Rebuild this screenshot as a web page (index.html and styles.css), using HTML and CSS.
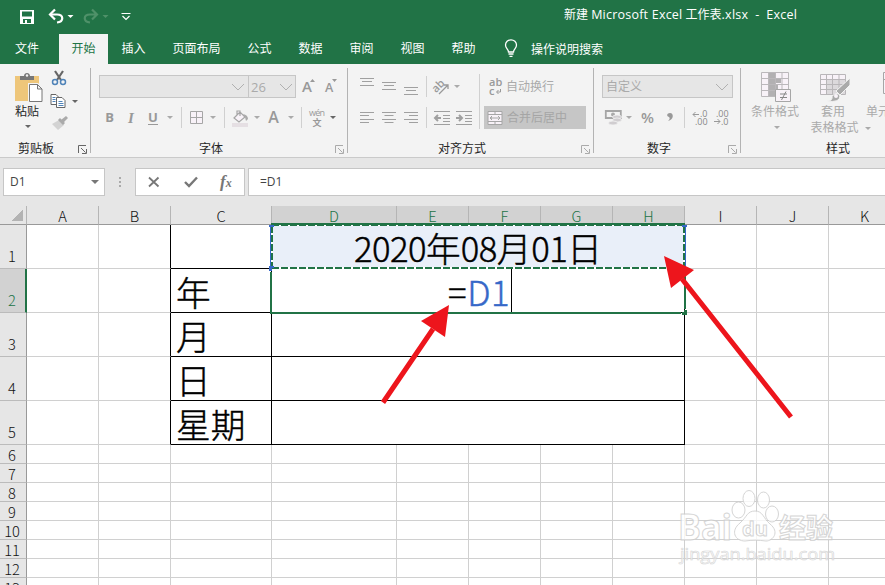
FILE: index.html
```html
<!DOCTYPE html>
<html lang="zh-CN">
<head>
<meta charset="utf-8">
<title>新建 Microsoft Excel 工作表.xlsx - Excel</title>
<link rel="stylesheet" href="styles.css">
</head>
<body>
<header class="titlebar">
  <svg class="quick" width="140" height="34" viewBox="0 0 140 34" fill="none">
    <path d="M20 10h14v14H20z" fill="#fff"/><path d="M22 11.5h10v5H22zM23 19h8v4h-8z" fill="#217346"/><path d="M25 20h2v3h-2z" fill="#fff"/>
    <path d="M50 14.500h7c7 0 7 7 0 8" stroke="#fff" stroke-width="2.200"/><path d="M55 9.500l-5 5 5 5" stroke="#fff" stroke-width="2.200"/>
    <path d="M67.500 15h6l-3 3z" fill="#fff"/>
    <g stroke="#4f9169" stroke-width="2.200"><path d="M97 14.500h-7c-7 0-7 7 0 8M92 9.500l5 5-5 5"/></g>
    <path d="M102.500 15h6l-3 3z" fill="#4f9169"/>
    <path d="M121.500 13.500h9M122.500 16l3.500 3.500 3.500-3.500" stroke="#fff" stroke-width="1.200"/>
  </svg>
  <div class="doc-title">新建 <span>Microsoft Excel</span> 工作表<span>.xlsx&nbsp; -&nbsp; Excel</span></div>
</header>
<nav class="tabs">
  <span class="t-file">文件</span><span class="active">开始</span><span>插入</span><span class="wide">页面布局</span><span>公式</span><span>数据</span><span>审阅</span><span>视图</span><span>帮助</span>
  <svg width="14" height="20" viewBox="0 0 14 20" fill="none" stroke="#fff" stroke-width="1.300"><path d="M4.500 13c0-3-3-3.500-3-7a5.500 5.200 0 0 1 11 0c0 3.500-3 4-3 7zM4.500 15h5M5.500 17.300h3"/></svg>
  <span class="tell">操作说明搜索</span>
</nav>
<section class="ribbon">
  <div class="group clipboard">
    <div class="body clip-body">
      <div class="paste">
        <svg width="30" height="32" viewBox="0 0 30 32"><path d="M1 4h24v25H1z" fill="#eec67a"/><path d="M6 8V4h4c0-4 6-4 6 0h4v4z" fill="#777"/><circle cx="13" cy="3.500" r="1.200" fill="#f3f3f3"/><path d="M14 11h10l6 6v15H14z" fill="#f3f3f3"/><path d="M15.500 12.500h8l4.500 4.500v12.500H15.500zM23.500 12.500V17H28" fill="#fff" stroke="#777"/></svg>
        <span>粘贴</span><i class="caret dark"></i>
      </div>
      <div class="clip-tools">
        <svg width="16" height="18" viewBox="0 0 16 18" fill="none"><path d="M4 2l6 9M12 2l-6 9" stroke="#666" stroke-width="2.200"/><circle cx="4" cy="13" r="2.500" stroke="#4f83b8" stroke-width="1.500"/><circle cx="12" cy="13" r="2.500" stroke="#4f83b8" stroke-width="1.500"/></svg>
        <div class="copy"><svg width="16" height="16" viewBox="0 0 16 16" fill="#fff" stroke="#666"><path d="M1 1.500h5l3 3v7H1z"/><path d="M2.500 4.500h3M2.500 6.500h3M2.500 8.500h3" stroke="#4f83b8"/><path d="M6.500 4.500h5.500l3 3v7H6.500z"/><path d="M8.500 8.500h4M8.500 10.500h5M8.500 12.500h5" stroke="#4f83b8"/></svg><i class="caret dark"></i></div>
        <svg width="17" height="15" viewBox="0 0 17 15"><path d="M1 8l7-4 5 5-6 5z" fill="#d3d3d3"/><path d="M7 4l2-2 5 5-2 2zM10 4l5-4 2 2-5 5z" fill="#aaa"/></svg>
      </div>
    </div>
    <div class="label"><span>剪贴板</span><svg class="launch on" width="10" height="10" viewBox="0 0 10 10"><path d="M.5 8V.5H8M3 3l4.500 4.500M8.500 4v4.500H4"/></svg></div>
  </div>

  <div class="group font">
    <div class="body">
      <div class="row font-top">
        <div class="combo name"><svg class="chev" width="16" height="10" viewBox="0 0 16 10"><path d="M2 2l6 6 6-6"/></svg></div>
        <div class="combo size"><span>26</span><svg class="chev" width="16" height="10" viewBox="0 0 16 10"><path d="M2 2l6 6 6-6"/></svg></div>
        <svg class="grow" width="40" height="23" viewBox="0 0 40 23" fill="#999"><text x="3" y="17" class="gl" font-size="15">A</text><path d="M11 7h5l-2.500-3zM33 4h5l-2.500 3z"/><text x="26" y="17" class="gl" font-size="12.500">A</text></svg>
      </div>
      <div class="row font-bottom">
        <b class="bold">B</b><b class="ital">I</b><b class="under">U</b><i class="caret"></i><i class="sep"></i>
        <svg width="15" height="15" viewBox="0 0 15 15" fill="#f8f2f8" stroke="#a6a6a6"><path d="M1.500 1.500h12v12h-12zM7.500 1.500v12M1.500 7.500h12"/></svg><i class="caret"></i><i class="sep"></i>
        <svg width="18" height="18" viewBox="0 0 18 18"><path d="M1 14h16v4H1z" fill="#e5dfe3"/><path d="M3 9l6-6 5 5-6 5zM6 6V2h3v5" fill="#f8f2f8" stroke="#a6a6a6" stroke-width="1.200"/><path d="M12 5q5 1 5 5l-2 2-1-4z" fill="#aaa"/></svg><i class="caret"></i>
        <b class="colour">A</b><i class="caret"></i><i class="sep"></i>
        <svg width="18" height="20" viewBox="0 0 18 20" fill="#999"><text x="1" y="8" font-size="9" textLength="16" class="gl2">wén</text><text x="4.500" y="18" font-size="9" class="cj">文</text></svg><i class="caret dark"></i>
      </div>
    </div>
    <div class="label"><span>字体</span><svg class="launch" width="10" height="10" viewBox="0 0 10 10"><path d="M.5 8V.5H8M3 3l4.500 4.500M8.500 4v4.500H4"/></svg></div>
  </div>

  <div class="group align">
    <div class="body align-body">
      <div class="align-left">
        <div class="row al-top">
          <svg width="14" height="23" viewBox="0 0 14 23" class="ln"><path d="M0 3.500h14M2 6.500h10M0 10.500h14"/></svg>
          <svg width="14" height="23" viewBox="0 0 14 23" class="ln"><path d="M0 7.500h14M2 10.500h10M0 14.500h14"/></svg>
          <svg width="14" height="23" viewBox="0 0 14 23" class="ln"><path d="M0 12.500h14M2 15.500h10M0 19.500h14"/></svg>
          <i class="sep"></i>
          <svg width="18" height="18" viewBox="0 0 18 18" fill="none" stroke="#999"><text x="0" y="12" font-size="11" class="gl" fill="#999" stroke="none" transform="rotate(-45 6 9)">ab</text><path d="M7 16l9-9M12 7h4v4" stroke-width="1.300"/></svg>
          <i class="caret"></i>
        </div>
        <div class="row al-bottom">
          <svg width="14" height="14" viewBox="0 0 14 14" class="ln"><path d="M0 1.500h14M0 4.500h9M0 8.500h14M0 11.500h9"/></svg>
          <svg width="14" height="14" viewBox="0 0 14 14" class="ln"><path d="M0 1.500h14M2.500 4.500h9M0 8.500h14M2.500 11.500h9"/></svg>
          <svg width="14" height="14" viewBox="0 0 14 14" class="ln"><path d="M0 1.500h14M5 4.500h9M0 8.500h14M5 11.500h9"/></svg>
          <i class="sep"></i>
          <svg width="16" height="14" viewBox="0 0 16 14" class="ln"><path d="M0 .5h16M9 4.500h7M9 7.500h7M9 10.500h7M0 13.500h16"/><path d="M1 7h6M4 4L1 7l3 3" stroke-width="2"/></svg>
          <svg width="16" height="14" viewBox="0 0 16 14" class="ln"><path d="M0 .5h16M9 4.500h7M9 7.500h7M9 10.500h7M0 13.500h16"/><path d="M0 7h6M3 4l3 3-3 3" stroke-width="2"/></svg>
        </div>
      </div>
      <div class="align-right">
        <div class="wrap"><svg width="14" height="18" viewBox="0 0 14 18" fill="#999"><text x="0" y="8" font-size="11" class="gl">ab</text><text x="0" y="17" font-size="11" class="gl">c</text><path d="M11.500 11v3H8M9.500 12L7.500 14l2 2" fill="none" stroke="#999"/></svg><span>自动换行</span></div>
        <div class="merge"><svg width="16" height="16" viewBox="0 0 16 16" fill="#f8f2f8" stroke="#a6a6a6"><path d="M1 1.500h14v13H1zM1 4.500h14M1 11.500h14M8 1.500v3M8 11.500v3M3 8h10M5 6L3 8l2 2M11 6l2 2-2 2"/></svg><span>合并后居中</span></div>
      </div>
    </div>
    <div class="label"><span>对齐方式</span><svg class="launch" width="10" height="10" viewBox="0 0 10 10"><path d="M.5 8V.5H8M3 3l4.500 4.500M8.500 4v4.500H4"/></svg></div>
  </div>

  <div class="group number">
    <div class="body">
      <div class="combo fmt"><span>自定义</span><svg class="chev" width="16" height="10" viewBox="0 0 16 10"><path d="M2 2l6 6 6-6"/></svg></div>
      <div class="row num-row">
        <svg width="17" height="17" viewBox="0 0 17 17"><path d="M.8 2h15v7H.8z" fill="#f3f3f3" stroke="#a6a6a6" stroke-width="1.800"/><circle cx="8" cy="5.500" r="2" fill="#aaa"/><g fill="#d0cdd0" stroke="#f3f3f3" stroke-width=".8"><ellipse cx="12" cy="8" rx="4.500" ry="2"/><ellipse cx="12" cy="11" rx="4.500" ry="2"/><ellipse cx="8" cy="14" rx="4.500" ry="2"/></g></svg><i class="caret"></i>
        <span class="pct">%</span><svg width="8" height="12" viewBox="0 0 8 12"><path d="M4 1c4 0 4 7-2 8 2-2 2-3 1-4-3-1-2-4 1-4z" fill="#999"/></svg><i class="sep"></i>
        <svg width="16" height="16" viewBox="0 0 16 16" fill="#888"><text x="8" y="7" font-size="9" class="gl2">.0</text><text x="3" y="15" font-size="9" class="gl2">.00</text><path d="M1 4.500h6M3.500 2L1 4.500 3.500 7" fill="none" stroke="#999"/></svg>
        <svg width="16" height="16" viewBox="0 0 16 16" fill="#888"><text x="3" y="7" font-size="9" class="gl2">.00</text><text x="8" y="15" font-size="9" class="gl2">.0</text><path d="M1 11.500h6M4.500 9L7 11.500 4.500 14" fill="none" stroke="#999"/></svg>
      </div>
    </div>
    <div class="label"><span>数字</span><svg class="launch" width="10" height="10" viewBox="0 0 10 10"><path d="M.5 8V.5H8M3 3l4.500 4.500M8.500 4v4.500H4"/></svg></div>
  </div>

  <div class="group style">
    <div class="body style-body">
      <div class="big"><svg width="30" height="32" viewBox="0 0 30 32"><path d="M.5 1.500h27v24H.5z" fill="#f8f2f8"/><path d="M8 1h6v24H8zM8 7h12v5H8zM8 13h9v5H8z" fill="#b2b0b2"/><path d="M.5 1.500h27v24H.5zM.5 7.500h27M.5 13.500h27M.5 19.500h27M7.500 1.500v24M14.500 1.500v24M21 1.500v24" fill="none" stroke="#bbb8bb"/><path d="M14.500 18.500h15v12h-15z" fill="#f8f2f8" stroke="#a6a6a6"/><path d="M19 23h7M19 26.500h7M25 20.500l-4.500 8.500" stroke="#888"/></svg><span>条件格式</span><i class="caret"></i></div>
      <div class="big table"><svg width="30" height="32" viewBox="0 0 30 32"><path d="M.5 3.500h25v20H.5z" fill="#f8f2f8"/><path d="M7 8h18v15H7z" fill="#dcd9dc"/><path d="M.5 3.500h25v20H.5zM.5 8.500h25M.5 13.500h25M.5 18.500h25M6.500 3.500v20M12.500 3.500v20M19 3.500v20" fill="none" stroke="#b9b6b9"/><path d="M30 7v7L20 24l-4-4z" fill="#aaa" stroke="#f3f3f3"/><path d="M7 30q6 0 5-5 6-5 8 0 0 7-13 5z" fill="#aaa" stroke="#f3f3f3"/><circle cx="16" cy="25" r="2" fill="#f8f2f8"/></svg><span>套用</span><div class="second">表格格式<i class="caret"></i></div></div>
      <div class="big cell"><svg width="30" height="32" viewBox="0 0 30 32"><path d="M.5 1.500h28v21H.5zM.5 8.500h28" fill="#f8f2f8" stroke="#a6a6a6"/></svg><span>单元</span></div>
    </div>
    <div class="label"><span>样式</span></div>
  </div>
</section>

<section class="formula">
  <div class="namebox"><span>D1</span><i class="caret"></i></div>
  <svg class="grip" width="4" height="12" viewBox="0 0 4 12" fill="#aaa"><path d="M1 1h2v2H1zM1 5h2v2H1zM1 9h2v2H1z"/></svg>
  <div class="fx">
    <svg width="14" height="12" viewBox="0 0 14 12" fill="none" stroke="#777" stroke-width="1.800"><path d="M2 1.500l9.500 9M11.500 1.500L2 10.500"/></svg>
    <svg width="14" height="12" viewBox="0 0 14 12" fill="none" stroke="#777" stroke-width="2.400"><path d="M1 6l4 4 8-8.500"/></svg>
    <em>f<small>x</small></em>
  </div>
  <div class="input">=D1</div>
</section>

<main class="sheet">
  <div class="cells" id="cells"></div>
  <svg class="overlay" width="885" height="379" viewBox="0 206 885 379" fill="none">
    <path d="M271 224h414" stroke="#217346" stroke-width="2"/>
    <path d="M272 225.500h412" stroke="#fff"/><path d="M272 225.500h412" stroke="#217346" stroke-dasharray="7 2"/>
    <path d="M270.500 226v42M685.500 226v42" stroke="#3668c8"/>
    <g stroke-width="2"><path d="M272 226v42M684 226v42M272 268h412" stroke="#fff"/><path d="M272 226v42M684 226v42M272 268h412" stroke="#217346" stroke-dasharray="7 2"/>
    <path d="M271 272v41h410M685 269v40" stroke="#217346"/></g>
    <path d="M269 225h5v2h-5zM269 266h5v2h-2v3h-3zM682 225h5v2h-5z" fill="#3668c8"/>
    <path d="M682 312h2v-2h3v5h-5z" fill="#217346"/>
    <path d="M511.500 269v43" stroke="#000"/>
    <g fill="#ed151c"><path d="M449 305l-4 32-24-16zM664 256l30 14-23 18z"/><path d="M383 402.500L433 329M791 417L682 279" stroke="#ed151c" stroke-width="5"/></g>
    <g class="mark">
      <g class="paw"><ellipse cx="738.500" cy="510" rx="6.500" ry="8"/><ellipse cx="749" cy="498.500" rx="6" ry="8"/><ellipse cx="763.500" cy="500" rx="6" ry="8"/><ellipse cx="772" cy="514" rx="6.500" ry="8"/><path d="M755 511c8 0 8 7 15 13 10 8 3 17-4 17-8-1-14-1-21 0-10 0-15-10-5-18 7-6 7-12 15-12z"/></g>
      <text x="678" y="540" font-size="35" textLength="54" lengthAdjust="spacingAndGlyphs">Bai</text><text x="742" y="536" font-size="20" textLength="26" lengthAdjust="spacingAndGlyphs">du</text>
      <text x="779" y="538" font-size="27" textLength="54" class="hz">经验</text><text x="680" y="560" font-size="17" textLength="155" lengthAdjust="spacingAndGlyphs" class="url">jingyan.baidu.com</text>
    </g>
  </svg>
</main>
<script src="script.js"></script>
</body>
</html>
```
FILE: styles.css
```css
*{box-sizing:border-box}
body{margin:0;width:885px;height:585px;overflow:hidden;font:12px/16px "Open Sans","Noto Sans CJK SC",sans-serif;color:#262626;background:#e6e6e6}
svg{display:block;flex:none;overflow:visible}
.titlebar{height:34px;background:#217346;display:flex}
.doc-title{margin:7px 0 0 424px;color:#fff;white-space:nowrap}
.doc-title span{font-size:12.500px;letter-spacing:.22px}
.tabs{height:30px;background:#217346;color:#fff;display:flex;align-items:center;white-space:nowrap}
.tabs span{width:51px;text-align:center;line-height:29px;height:30px}
.tabs .t-file{width:59px;padding-right:5px}
.tabs .active{width:49px;background:#f3f3f3;color:#217346}
.tabs .wide{width:75px}
.tabs svg{margin-left:15px}
.tabs .tell{width:80px;margin-left:9px;line-height:31px}
.ribbon{height:94px;background:#f3f3f3;border-bottom:1px solid #cacaca;display:flex;overflow:hidden}
.group{position:relative;height:85px;margin-top:4px;border-right:1px solid #b3b3b3;padding-left:8px;flex:none;display:flex;flex-direction:column}
.body{height:72px;flex:none}
.label{height:16px;display:flex;justify-content:center;white-space:nowrap;margin-left:-8px}
.label span{margin:1px 0 -1px auto}
.launch{margin:5px 2px 0 auto;fill:none;stroke:#aaa}
.launch.on{stroke:#666}
.clipboard{width:91px}.font{width:257px}.align{width:246px}.number{width:147px}.style{width:190px;border:0}
.clipboard .label span{margin-left:18px}
.font .label span{margin-left:108px}.align .label span{margin-left:90px}.number .label span{margin-left:53px}.style .label span{margin-left:0}
.caret{width:0;height:0;border:3px solid transparent;border-top:3px solid #aaa;border-bottom:0;justify-self:center}
.caret.dark{border-top-color:#666}
.clip-body{display:flex}
.paste{width:40px;display:flex;flex-direction:column;align-items:center;padding:4px 0 0 1px}
.paste span{line-height:16px;margin:0 3px 0 0}
.paste .caret{margin:5px 2px 0 0}
.clip-tools{margin-left:3px;display:flex;flex-direction:column}
.clip-tools svg:first-child{margin-top:1px}
.clip-tools>.copy svg{margin:0}
.copy{display:flex;align-items:center;gap:6px;margin:6px 0 7px -1px}
.row{display:grid;height:23px;align-items:center;justify-items:center}
.font-top{grid-template-columns:149px 48px 46px;margin-top:7px}
.combo{height:23px;border:1px solid #c6c6c6;background:#e6e6e6;color:#aaa;display:flex;align-items:center;justify-content:flex-end;padding-right:2px}
.combo span{margin-right:auto;padding-left:3px}
.combo.name{width:150px;justify-self:start}.combo.size{width:48px;font-size:13px;padding-right:1px}
.combo.size span{padding-left:2px}
.combo.fmt{width:131px;margin-top:7px}
.chev{fill:none;stroke:#b0b0b0}
.gl{font-family:"Open Sans",sans-serif;font-weight:600}.gl2{font-family:"Open Sans",sans-serif}.cj{font-family:"Noto Sans CJK SC",sans-serif;font-weight:700}
.font-bottom{grid-template-columns:21px 22px 22px 12px 10px 21px 12px 10px 22px 11px 23px 11px 10px 22px 10px;margin-top:8px}
.font-bottom b{color:#999;font-size:13px}
.font-bottom .bold{margin-top:-2px}
.font-bottom .ital{font-family:"Liberation Serif",serif;font-style:italic;font-size:15px}
.font-bottom .under{border-bottom:1px solid #999;line-height:13px}
.font-bottom .colour{font-size:16px;font-weight:600;margin-top:-2px}
.sep{width:1px;height:21px;background:#d0d0d0}
.align-body{display:flex}
.align-left{width:124px;height:55px;margin-top:6px;border-right:1px solid #d0d0d0}
.al-top{grid-template-columns:22px 22px 22px 8px 22px 10px;margin-top:1px}
.al-bottom{grid-template-columns:22px 22px 22px 8px 23px 22px;margin-top:8px}
.ln{fill:none;stroke:#a0a0a0}
.align-right{margin:7px 0 0 4px;width:102px;color:#aaa}
.wrap,.merge{height:23px;display:flex;align-items:center;gap:3px;padding-left:5px}
.merge{padding-left:3px;gap:4px;background:#c6c6c6;color:#a5a5a5;margin-top:8px}
.num-row{grid-template-columns:22px 10px 27px 17px 12px 19px 24px;margin-top:8px}
.pct{font-size:15px;font-weight:600;color:#999;margin-top:-2px}
.style-body{display:flex;color:#aaa;white-space:nowrap}
.style{padding-left:10px}
.style .label{margin-left:0;width:174px}
.big{width:48px;display:flex;flex-direction:column;align-items:center}
.big svg{margin:3px 0 0 1px}
.big span{margin-top:1px}
.big>.caret{margin:6px 0 0 4px}
.big.table{margin-left:5px;width:58px}
.big.table svg{margin-left:4px}
.big.cell{margin-left:4px;align-items:flex-start}
.big.cell svg{margin-left:17px}
.table .second{display:flex;align-items:center;gap:6px;margin-right:-15px}
.formula{height:48px;display:flex;align-items:flex-start;padding:10px 0 0 3px;color:#444}
.formula>div{height:28px;background:#fff;border:1px solid #c6c6c6;display:flex;align-items:center}
.namebox{width:102px;justify-content:space-between;padding:0 5px 0 6px}
.namebox .caret{border-width:4px 4px 0;border-top-color:#777}
.grip{margin:8px 13px 0 13px}
.fx{width:110px;padding-left:11px;gap:23px}
.fx em{font:italic 700 17px/20px "Liberation Serif",serif;color:#777;margin-left:-1px}
.fx small{font-size:12px}
.formula .input{flex:1;margin-left:3px;padding-left:11px;border-right:0}
.sheet{position:relative;height:379px;overflow:hidden}
.cells{display:grid;width:891px;grid-template-columns:27px 72px 72px 101px 125px repeat(7,72px);grid-template-rows:19px repeat(5,44px) repeat(8,19px);font:300 14.67px/18px "Noto Sans CJK SC",sans-serif;color:#111}
.cells div{border-right:1px solid #d0d0d0;border-bottom:1px solid #d0d0d0;background:#fff;display:flex;white-space:nowrap}
.cells .head{background:#e6e6e6;border-right-color:#b5b5b5;border-bottom-color:#999;justify-content:center;line-height:20px}
.cells .side{background:#e6e6e6;border-right-color:#999;border-bottom-color:#bbb;justify-content:center;align-items:flex-end;line-height:17px;padding-right:2px}
.cells .tall{padding-bottom:4px}
.cells .on{background:#d2d2d2;color:#217346}
.cells .side.on{border-right:2px solid #217346;padding-right:1px}
.cells .corner{background:linear-gradient(135deg,#e6e6e6 50%,#b3b3b3 50%) 12px 4px/11px 11px no-repeat #e6e6e6}
.cells .edge{border-right-color:#000}
.cells .box{border-color:#000;color:#000;font-size:34.67px;line-height:41px;padding:2px 0 0 5px;-webkit-text-stroke:.45px currentColor}
.cells .merged{grid-column:5/10;padding-left:0}
.cells .date{background:#e9eff9;justify-content:center}
.date .n{letter-spacing:-.55px}
.edit{padding-left:176px;letter-spacing:.6px}
.edit b{font-weight:300;color:#3668c8}
.overlay{position:absolute;left:0;top:0}
.mark{fill:#fff;stroke:#ccc;stroke-width:1;opacity:.8;font-family:"Open Sans",sans-serif;font-weight:700}
.hz{font-family:"Noto Sans CJK SC",sans-serif}
.url{font-weight:400;stroke-width:.6}
```
FILE: script.js
```js
const root = document.getElementById('cells');
const labels = ['', '年', '月', '日', '星期'];
function add(cls, html) {
  const el = document.createElement('div');
  el.className = cls;
  el.innerHTML = html || '';
  root.appendChild(el);
  return el;
}
add('head corner');
for (const c of 'ABCDEFGHIJK') add('head' + ('DEFGH'.includes(c) ? ' on' : ''), c);
for (let r = 1; r <= 13; r++) {
  add('side' + (r <= 5 ? ' tall' : '') + (r === 2 ? ' on' : ''), r);
  add('');
  if (r <= 5) {
    add('edge');
    add('box', labels[r - 1]);
    if (r === 1) add('box merged date', '<span class="n">2020</span>年<span class="n">08</span>月<span class="n">01</span>日');
    else if (r === 2) add('box merged', '<span class="edit">=<b>D1</b></span>');
    else add('box merged');
    for (let i = 0; i < 3; i++) add('');
  } else {
    for (let i = 0; i < 10; i++) add('');
  }
}
```
